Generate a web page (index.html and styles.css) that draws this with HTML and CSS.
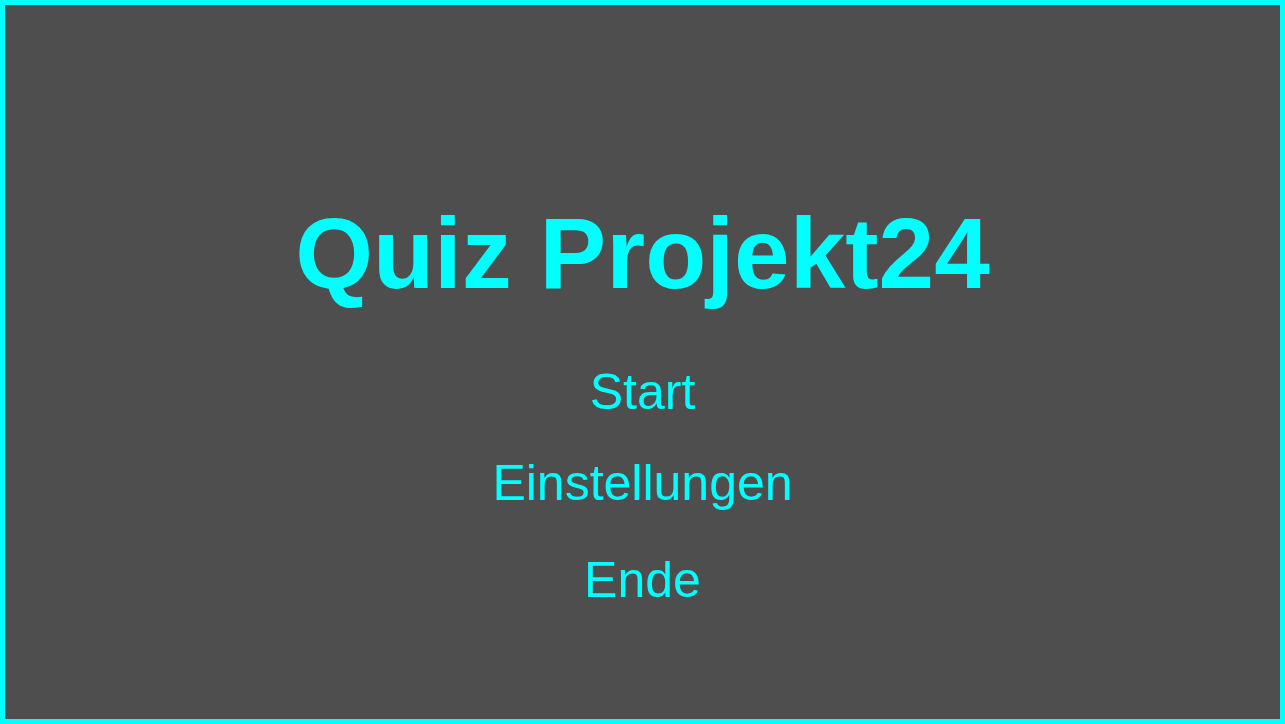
FILE: index.html
```html
<!DOCTYPE html>
<html lang="de">
<head>
<meta charset="utf-8">
<title>Quiz Projekt24</title>
<link rel="stylesheet" href="styles.css">
</head>
<body>
<main class="screen">
  <h1 class="title">Quiz Projekt24</h1>
  <nav class="menu">
    <a class="menu-item item-start" href="#">Start</a>
    <a class="menu-item item-settings" href="#">Einstellungen</a>
    <a class="menu-item item-end" href="#">Ende</a>
  </nav>
</main>
</body>
</html>
```
FILE: styles.css
```css
html, body {
  margin: 0;
  padding: 0;
}
body {
  font-family: "Liberation Sans", Arial, sans-serif;
  background: #4e4e4e;
}
.screen {
  box-sizing: border-box;
  width: 1285px;
  height: 724px;
  border: 5px solid #00ffff;
  background: #4e4e4e;
  display: flex;
  flex-direction: column;
  align-items: center;
  padding-top: 198px;
}
.title {
  margin: 0;
  font-size: 100px;
  line-height: 100px;
  font-weight: bold;
  color: #00ffff;
}
.menu {
  display: flex;
  flex-direction: column;
  align-items: center;
  margin-top: 59px;
}
.menu-item {
  font-size: 50px;
  line-height: 60px;
  color: #00ffff;
  text-decoration: none;
}
.item-settings {
  margin-top: 31px;
}
.item-end {
  margin-top: 37px;
}
```
